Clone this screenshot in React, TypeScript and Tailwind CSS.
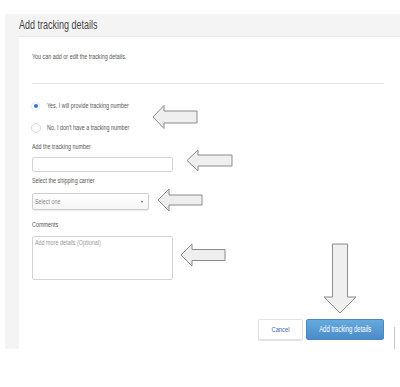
import React from 'react';

const font = { fontFamily: '"Liberation Sans", Arial, sans-serif' };

// Squeezed text: the screenshot is horizontally compressed
function T({ children, className = '' }: { children: React.ReactNode; className?: string }) {
    return (
        <span className={`inline-block origin-left scale-x-[0.72] whitespace-nowrap ${className}`}>
            {children}
        </span>
    );
}

function Arrow({ tip, back, tail, cy, head, shaft }: { tip: number; back: number; tail: number; cy: number; head: number; shaft: number }) {
    const pts = [
        [tip, cy],
        [back, cy - head],
        [back, cy - shaft],
        [tail, cy - shaft],
        [tail, cy + shaft],
        [back, cy + shaft],
        [back, cy + head],
    ]
        .map(p => p.join(','))
        .join(' ');
    return <polygon points={pts} fill="#efefef" stroke="#8a8a8a" strokeWidth="1" />;
}

export default function App() {
    return (
        <div className="relative w-[400px] h-[387px] bg-white overflow-hidden pt-[14px] pl-[5px]" style={font}>
            {/* Gray panel */}
            <div className="h-[335px] bg-[#f4f4f4] flex flex-col overflow-hidden">
                <div className="h-[22px] pl-[14px] flex items-center">
                    <T className="text-[12.5px] leading-[14px] text-[#444]">Add tracking details</T>
                </div>

                {/* Card */}
                <div className="ml-[14px] w-[400px] h-[313px] bg-white border-t border-[#e8e8e8] pt-[15px] px-[13px]">
                    <div className="h-[10px] leading-[10px] text-[7.5px] text-[#555]">
                        <T>You can add or edit the tracking details.</T>
                    </div>
                    <div className="mt-[21px] w-[352px] border-t border-[#e6e6e6]"></div>

                    <div className="mt-[17px] h-[10px] flex items-center">
                        <div className="ml-[-1px] w-[9px] h-[9px] rounded-full border border-[#e6e6e6] flex items-center justify-center">
                            <div className="w-[4px] h-[4px] rounded-full bg-[#2b78d0]"></div>
                        </div>
                        <div className="ml-[7px] text-[7.5px] leading-[10px] text-[#555]">
                            <T>Yes, I will provide tracking number</T>
                        </div>
                    </div>
                    <div className="mt-[12px] h-[10px] flex items-center">
                        <div className="ml-[-1px] w-[10px] h-[10px] rounded-full border border-[#d6d6d6] bg-white"></div>
                        <div className="ml-[6px] text-[7.5px] leading-[10px] text-[#555]">
                            <T>No, I don't have a tracking number</T>
                        </div>
                    </div>

                    <div className="mt-[9px] h-[10px] leading-[10px] text-[7.5px] text-[#555]">
                        <T>Add the tracking number</T>
                    </div>
                    <div className="mt-[5px] w-[141px] h-[15px] rounded-[2px] border border-[#d4d4d4] bg-white"></div>

                    <div className="mt-[4px] h-[10px] leading-[10px] text-[7.5px] text-[#555]">
                        <T>Select the shipping carrier</T>
                    </div>
                    <div className="mt-[7px] w-[117px] h-[17px] rounded-[2px] border border-[#cfcfcf] bg-gradient-to-b from-white to-[#f6f6f6] shadow-[0_1px_1px_rgba(0,0,0,0.08)] flex items-center pl-[2px] pr-[5px]">
                        <div className="flex-1 text-[7.5px] leading-[10px] text-[#8a8a8a]">
                            <T>Select one</T>
                        </div>
                        <div className="w-0 h-0 border-l-[1.5px] border-r-[1.5px] border-t-[2px] border-l-transparent border-r-transparent border-t-[#555]"></div>
                    </div>

                    <div className="mt-[10px] h-[10px] leading-[10px] text-[7.5px] text-[#555]">
                        <T>Comments</T>
                    </div>
                    <div className="mt-[6px] w-[141px] h-[44px] rounded-[2px] border border-[#d4d4d4] bg-white pt-[1px] pl-[2px]">
                        <div className="text-[7.5px] leading-[10px] text-[#999]">
                            <T>Add more details (Optional)</T>
                        </div>
                    </div>

                    <div className="mt-[39px] w-[352px] flex justify-end gap-[3px]">
                        <div className="w-[45px] h-[21px] rounded-[2px] border border-[#e2e2e2] bg-white shadow-[0_1px_1px_rgba(0,0,0,0.12)] flex items-center justify-center">
                            <span className="inline-block scale-x-[0.72] whitespace-nowrap text-[8px] text-[#3a66b0]">Cancel</span>
                        </div>
                        <div className="w-[78px] h-[21px] rounded-[2px] border border-[#4b88c3] bg-gradient-to-b from-[#66aadd] to-[#4b8bc9] flex items-center justify-center">
                            <span className="inline-block scale-x-[0.72] whitespace-nowrap text-[8.3px] text-white">Add tracking details</span>
                        </div>
                    </div>
                </div>
            </div>

            {/* Annotation arrows */}
            <svg className="absolute left-0 top-0" width="400" height="387" viewBox="0 0 400 387">
                <Arrow tip={153} back={164} tail={197} cy={117} head={11.5} shaft={6} />
                <Arrow tip={187} back={198} tail={232} cy={160.5} head={10.5} shaft={5.5} />
                <Arrow tip={158} back={169} tail={202} cy={200} head={11} shaft={5} />
                <Arrow tip={181} back={192} tail={225} cy={255} head={11} shaft={5.5} />
                <polygon
                    points="340,313 324,297 332.5,297 332.5,244 347.5,244 347.5,297 356,297"
                    fill="#efefef"
                    stroke="#8a8a8a"
                    strokeWidth="1"
                />
                <line x1="394.5" y1="327" x2="394.5" y2="349" stroke="#c8c8c8" strokeWidth="1" />
            </svg>
        </div>
    );
}
